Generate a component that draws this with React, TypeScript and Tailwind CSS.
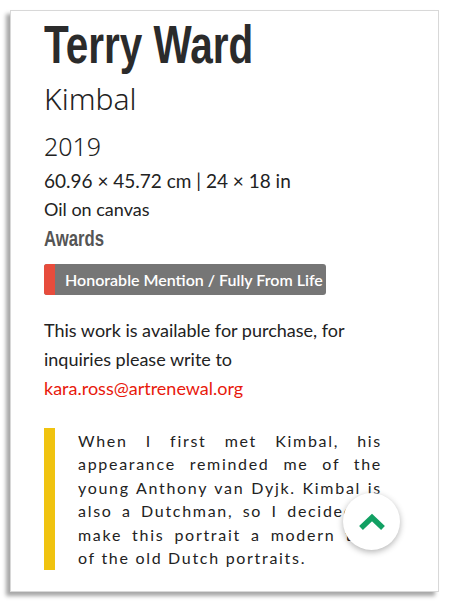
import React from "react";

const sans = { fontFamily: "'Noto Sans', 'Liberation Sans', sans-serif" };
const lato = { fontFamily: "Lato, 'Noto Sans', sans-serif" };

export default function App() {
  const lines = [
    "When I first met Kimbal, his",
    "appearance reminded me of the",
    "young Anthony van Dyjk. Kimbal is",
    "also a Dutchman, so I decided to",
    "make this portrait a modern take",
  ];
  return (
    <div className="relative w-[450px] h-[602px] bg-white overflow-hidden">
      <div className="absolute left-[10px] top-[10px] w-[429px] h-[582px] bg-white border border-[#d8d8d8] shadow-[-4px_4px_4px_rgba(0,0,0,0.35)]">
        <div className="pl-[33px] pt-[6px] flex flex-col items-start">
          <h1
            className="inline-block origin-left scale-x-[0.75] text-[54px] leading-[54px] font-bold text-[#2b2b2b] whitespace-nowrap"
            style={{ fontFamily: "'Liberation Sans', Arial, sans-serif" }}
          >
            Terry Ward
          </h1>
          <div className="mt-[12px] text-[30px] leading-[32px] font-light text-[#222]" style={sans}>
            Kimbal
          </div>
          <div className="mt-[16px] text-[25px] leading-[30px] font-light text-[#222]" style={sans}>
            2019
          </div>
          <div className="mt-[7px] text-[19px] leading-[26px] text-[#222]" style={lato}>
            60.96 × 45.72 cm | 24 × 18 in
          </div>
          <div className="mt-[2px] text-[18px] leading-[26px] text-[#222]" style={lato}>
            Oil on canvas
          </div>
          <div
            className="inline-block origin-left scale-x-[0.76] mt-[4px] text-[22px] leading-[26px] font-bold text-[#555]"
            style={{ fontFamily: "'Liberation Sans', Arial, sans-serif" }}
          >
            Awards
          </div>
          <div className="mt-[12px] flex h-[31px] w-[282px] rounded-[3px] overflow-hidden bg-[#767676]">
            <div className="w-[11px] shrink-0 bg-[#e74c3c]" />
            <div
              className="pl-[10px] text-[16px] leading-[31px] font-semibold text-white whitespace-nowrap"
              style={lato}
            >
              Honorable Mention / Fully From Life
            </div>
          </div>
          <div className="mt-[21px] text-[18px] leading-[29px] text-[#222]" style={lato}>
            This work is available for purchase, for
            <br />
            inquiries please write to
            <br />
            <span className="text-[#e8190c]">kara.ross@artrenewal.org</span>
          </div>
          <div className="mt-[25px] flex">
            <div className="w-[11px] shrink-0 bg-[#f0c30f]" />
            <div
              className="ml-[23px] w-[304px] py-[1px] text-[16px] leading-[23.4px] tracking-[1.7px] text-[#222]"
              style={lato}
            >
              {lines.map((l, i) => (
                <div key={i} className="text-justify [text-align-last:justify]">
                  {l}
                </div>
              ))}
              <div>of the old Dutch portraits.</div>
            </div>
          </div>
        </div>
      </div>
      <div className="absolute left-[343px] top-[493px] w-[57px] h-[57px] rounded-full bg-white shadow-[0_2px_6px_rgba(0,0,0,0.3)] flex items-center justify-center">
        <svg width="28" height="18" viewBox="0 0 28 18">
          <polyline
            points="3,15 14,4.5 25,15"
            fill="none"
            stroke="#12a063"
            strokeWidth="5.5"
            strokeLinecap="butt"
            strokeLinejoin="miter"
          />
        </svg>
      </div>
    </div>
  );
}
